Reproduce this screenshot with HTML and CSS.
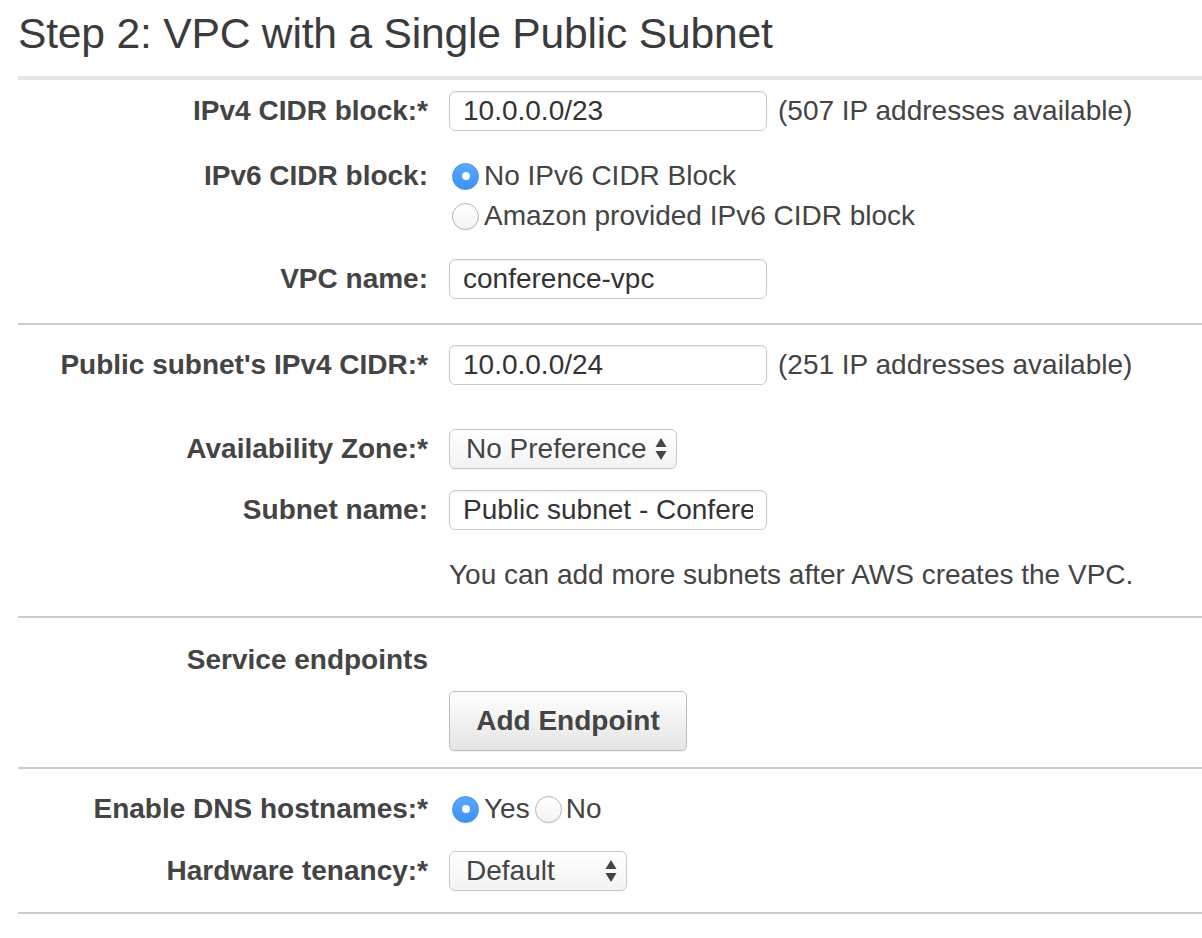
FILE: index.html
```html
<!DOCTYPE html>
<html>
<head>
<meta charset="utf-8">
<link rel="stylesheet" href="styles.css">
</head>
<body>
<div class="page">
  <h1 class="title">Step 2: VPC with a Single Public Subnet</h1>
  <div class="rule-top"></div>

  <div class="row row-a">
    <div class="label">IPv4 CIDR block:*</div>
    <div class="field">
      <input class="text-input" type="text" value="10.0.0.0/23">
      <span class="note">(507 IP addresses available)</span>
    </div>
  </div>

  <div class="row row-b">
    <div class="label label-line">IPv6 CIDR block:</div>
    <div class="radio-group">
      <div class="radio-line"><span class="radio checked"></span><span class="radio-text">No IPv6 CIDR Block</span></div>
      <div class="radio-line"><span class="radio"></span><span class="radio-text">Amazon provided IPv6 CIDR block</span></div>
    </div>
  </div>

  <div class="row row-c">
    <div class="label">VPC name:</div>
    <div class="field">
      <input class="text-input" type="text" value="conference-vpc">
    </div>
  </div>

  <div class="sep sep-1"></div>

  <div class="row row-d">
    <div class="label">Public subnet's IPv4 CIDR:*</div>
    <div class="field">
      <input class="text-input" type="text" value="10.0.0.0/24">
      <span class="note">(251 IP addresses available)</span>
    </div>
  </div>

  <div class="row row-e">
    <div class="label">Availability Zone:*</div>
    <div class="field">
      <div class="select select-az">
        <span class="select-text">No Preference</span>
        <svg class="arrows" width="12" height="28" viewBox="0 0 12 28"><path d="M6 3 L11.5 12 L0.5 12 Z" fill="#444"/><path d="M0.5 16 L11.5 16 L6 25 Z" fill="#444"/></svg>
      </div>
    </div>
  </div>

  <div class="row row-f">
    <div class="label">Subnet name:</div>
    <div class="field">
      <input class="text-input" type="text" value="Public subnet - Conference">
    </div>
  </div>

  <div class="row row-help">
    <div class="label"></div>
    <div class="help">You can add more subnets after AWS creates the VPC.</div>
  </div>

  <div class="sep sep-2"></div>

  <div class="row row-g">
    <div class="label">Service endpoints</div>
  </div>

  <div class="row row-h">
    <div class="label"></div>
    <button class="btn" type="button">Add Endpoint</button>
  </div>

  <div class="sep sep-3"></div>

  <div class="row row-i">
    <div class="label">Enable DNS hostnames:*</div>
    <div class="radio-inline">
      <span class="radio checked"></span><span class="radio-text">Yes</span>
      <span class="radio radio-second"></span><span class="radio-text">No</span>
    </div>
  </div>

  <div class="row row-j">
    <div class="label">Hardware tenancy:*</div>
    <div class="field">
      <div class="select select-ht">
        <span class="select-text">Default</span>
        <svg class="arrows" width="12" height="28" viewBox="0 0 12 28"><path d="M6 3 L11.5 12 L0.5 12 Z" fill="#444"/><path d="M0.5 16 L11.5 16 L6 25 Z" fill="#444"/></svg>
      </div>
    </div>
  </div>

  <div class="sep sep-4"></div>
</div>
</body>
</html>
```

FILE: styles.css
```css
html, body {
  margin: 0;
  padding: 0;
  background: #ffffff;
}

body {
  font-family: "Liberation Sans", Arial, sans-serif;
  color: #444444;
  font-size: 28px;
}

.page {
  padding-left: 18px;
}

.title {
  margin: 0;
  padding-top: 9px;
  font-size: 42.6px;
  font-weight: normal;
  line-height: 48px;
  color: #3b3b3b;
  letter-spacing: -0.2px;
}

.rule-top {
  margin-top: 19px;
  height: 4px;
  background: #e5e5e5;
}

.sep {
  height: 2px;
  background: #cccccc;
}

.row {
  display: flex;
  align-items: center;
}

.label {
  width: 410px;
  flex: none;
  text-align: right;
  font-weight: bold;
  color: #444444;
  margin-right: 21px;
  line-height: 40px;
  white-space: nowrap;
}

.field {
  display: flex;
  align-items: center;
}

.text-input {
  box-sizing: border-box;
  width: 318px;
  height: 40px;
  border: 1px solid #cbcbcb;
  border-radius: 6px;
  padding: 0 13px;
  font-family: "Liberation Sans", Arial, sans-serif;
  font-size: 28px;
  color: #333333;
  background: #ffffff;
  box-shadow: inset 0 1px 2px rgba(0,0,0,0.08);
  outline: none;
  margin: 0;
}

.note {
  margin-left: 11px;
  white-space: nowrap;
  color: #444444;
}

.row-a { margin-top: 11px; }
.row-b { margin-top: 25px; align-items: flex-start; }
.row-c { margin-top: 23px; }
.sep-1 { margin-top: 24px; }
.row-d { margin-top: 20px; }
.row-e { margin-top: 44px; }
.row-f { margin-top: 21px; }
.row-help { margin-top: 25px; }
.sep-2 { margin-top: 21px; }
.row-g { margin-top: 22px; }
.row-h { margin-top: 11px; }
.sep-3 { margin-top: 16px; }
.row-i { margin-top: 20px; }
.row-j { margin-top: 22px; }
.sep-4 { margin-top: 21px; }

.radio-group {
  display: flex;
  flex-direction: column;
}

.radio-line {
  display: flex;
  align-items: center;
  height: 40px;
}

.radio-inline {
  display: flex;
  align-items: center;
  height: 40px;
}

.radio {
  box-sizing: border-box;
  width: 27px;
  height: 27px;
  border-radius: 50%;
  border: 1px solid #b4b4b4;
  background: linear-gradient(#ffffff, #f4f4f4);
  box-shadow: 0 1px 1px rgba(0,0,0,0.06);
  margin-left: 3px;
  margin-right: 5px;
  flex: none;
  position: relative;
}

.radio.checked {
  border: 1px solid #3f8fee;
  background: linear-gradient(#5aa9fb, #3d90f5);
}

.radio.checked::after {
  content: "";
  position: absolute;
  left: 50%;
  top: 50%;
  width: 8px;
  height: 8px;
  margin-left: -4px;
  margin-top: -4px;
  border-radius: 50%;
  background: #ffffff;
}

.radio-second {
  margin-left: 5px;
  margin-right: 4px;
}

.radio-text {
  white-space: nowrap;
  color: #444444;
}

.select {
  box-sizing: border-box;
  height: 40px;
  border: 1px solid #c8c8c8;
  border-radius: 6px;
  background: linear-gradient(#ffffff, #f3f3f3);
  display: flex;
  align-items: center;
  padding-left: 16px;
  padding-right: 9px;
  color: #444444;
  box-shadow: 0 1px 1px rgba(0,0,0,0.04);
}

.select-text {
  flex: 1;
  white-space: nowrap;
}

.select-az {
  width: 228px;
}

.select-ht {
  width: 178px;
}

.arrows {
  flex: none;
  display: block;
}

.help {
  line-height: 40px;
  white-space: nowrap;
  color: #444444;
}

.btn {
  box-sizing: border-box;
  width: 238px;
  height: 60px;
  border: 1px solid #bdbdbd;
  border-radius: 5px;
  background: linear-gradient(#ffffff, #e4e4e4);
  font-family: "Liberation Sans", Arial, sans-serif;
  font-size: 28px;
  font-weight: bold;
  color: #444444;
  padding: 0;
  margin: 0;
  box-shadow: 0 1px 1px rgba(0,0,0,0.05);
}
```
